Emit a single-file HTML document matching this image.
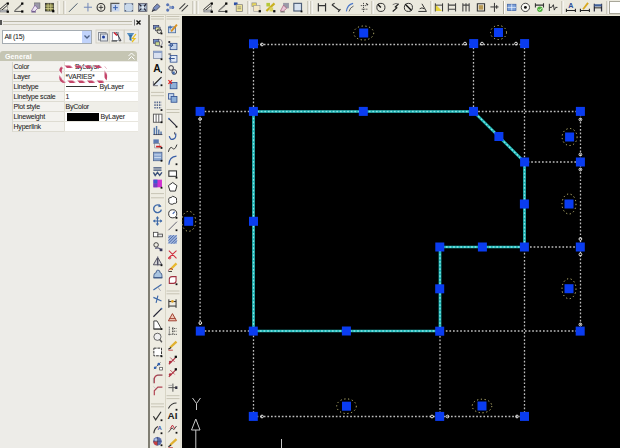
<!DOCTYPE html>
<html><head><meta charset="utf-8">
<style>
*{margin:0;padding:0;box-sizing:border-box}
html,body{width:620px;height:448px;overflow:hidden;background:#ECE9D8;font-family:"Liberation Sans",sans-serif;}
.abs{position:absolute}
#tb{left:0;top:0;width:620px;height:15px;background:#EBE9DE;border-bottom:1px solid #D3D0C2}
#pal{left:0;top:15px;width:148px;height:433px;background:#EDECE8}
#vt{left:148px;top:15px;width:34px;height:433px;background:#EEECE2}
#dw{left:182px;top:16px;width:438px;height:432px;background:#000}
.row{position:absolute;left:11.5px;width:125px;height:10px;font-size:7px;letter-spacing:-0.2px;color:#1A1A1A;-webkit-text-stroke:0.05px #222}
.row .n{position:absolute;left:0;top:0;width:52px;height:10.2px;padding-left:1px;line-height:10px;border-bottom:1px solid #DEDCD2;border-left:1px solid #D8D6CC;background:#F3F2EE}
.row .v{position:absolute;left:52px;top:0;width:74px;height:10px;padding-left:1px;line-height:10px;background:#fff;border-bottom:1px solid #E8E6DE;border-left:1px solid #E0DED4}
</style></head>
<body>
<div id="tb" class="abs"></div>
<div id="pal" class="abs"></div>
<div id="vt" class="abs"></div>
<div id="dw" class="abs"></div>
<div class="abs" style="left:148px;top:15px;width:1.5px;height:433px;background:#7F7D72"></div>
<div class="abs" style="left:164.5px;top:15px;width:1px;height:433px;background:#D8D5C6"></div>
<div class="abs" style="left:180px;top:16px;width:2px;height:432px;background:#E4E2D6"></div>
<div class="abs" style="left:608.5px;top:1px;width:12px;height:12.5px;background:#fff;border:1px solid #A9A79A;border-right:none"></div>

<!-- palette content -->
<div class="abs" style="left:3px;top:21px;width:129px;height:1px;background:#B8B5A6"></div>
<div class="abs" style="left:3px;top:24px;width:129px;height:1px;background:#CFCCBE"></div>
<div class="abs" style="left:0;top:20px;width:1.5px;height:5px;background:#555"></div>
<svg class="abs" style="left:133px;top:18px" width="9" height="9"><path d="M1.5 1.5V7.5" stroke="#777" stroke-width="1"/><path d="M3.5 2.5L7.5 6.5M7.5 2.5L3.5 6.5" stroke="#111" stroke-width="1.4"/></svg>
<div class="abs" style="left:2px;top:30px;width:90px;height:14px;background:#fff;border:1px solid #A5ACB2"></div>
<div class="abs" style="left:4.5px;top:32.5px;font-size:7px;color:#111;letter-spacing:-0.3px">All (15)</div>
<div class="abs" style="left:82px;top:31px;width:9px;height:12px;background:#C1D3FB"></div>
<div class="abs" style="left:0;top:51px;width:137px;height:10px;background:#C5C5B3;border-radius:3px 3px 0 0"></div>
<div class="abs" style="left:5px;top:51.5px;font-size:7px;font-weight:bold;color:#fff;line-height:10px;letter-spacing:0.1px">General</div>
<div class="abs" style="left:0;top:61px;width:11.5px;height:71px;background:#EDECE8"></div>

<div class="row" style="top:61.5px"><div class="n">Color</div><div class="v" style="padding-left:10.5px">ByLayer</div></div>
<div class="row" style="top:71.5px"><div class="n">Layer</div><div class="v">*VARIES*</div></div>
<div class="row" style="top:81.6px"><div class="n">Linetype</div><div class="v"><span style="display:inline-block;width:31px;height:1px;background:#333;vertical-align:middle;margin:0 3px 0 0"></span>ByLayer</div></div>
<div class="row" style="top:91.8px"><div class="n">Linetype scale</div><div class="v">1</div></div>
<div class="row" style="top:102px"><div class="n">Plot style</div><div class="v" style="background:#EFEEE8">ByColor</div></div>
<div class="row" style="top:112px"><div class="n">Lineweight</div><div class="v"><span style="display:inline-block;width:32px;height:8px;background:#000;vertical-align:middle;margin:0 2px 0 1px"></span>ByLayer</div></div>
<div class="row" style="top:122px"><div class="n">Hyperlink</div><div class="v"></div></div>

<svg class="abs" style="left:0;top:0" width="620" height="448" viewBox="0 0 620 448">
<defs><pattern id="rp" patternUnits="userSpaceOnUse" width="7.5" height="7.5" patternTransform="rotate(-40)"><rect x="0" y="0" width="4.3" height="7.5" fill="#C4456A"/></pattern></defs>
<rect x="60.5" y="66.7" width="45.3" height="15" rx="4" ry="4" fill="none" stroke="#FFFFFF" stroke-opacity="0.45" stroke-width="2.6"/>
<rect x="60.5" y="66.7" width="45.3" height="15" rx="4" ry="4" fill="none" stroke="url(#rp)" stroke-width="2.6"/>
<path d="M128.5 56L131.5 53L134.5 56M128.5 59.5L131.5 56.5L134.5 59.5" stroke="#fff" stroke-width="1" fill="none"/>
<g fill="none" stroke="#D5D2C6" stroke-width="1"><rect x="96" y="30" width="13" height="13"/><rect x="109.5" y="30" width="14.5" height="13"/><rect x="124.5" y="30" width="14" height="13"/></g>
<rect x="98.5" y="32.5" width="7.5" height="7.5" fill="#E8ECF2" stroke="#8A8F98" stroke-width="1"/>
<rect x="100.5" y="34" width="7" height="7" fill="#DDE4EE" stroke="#7A7F88" stroke-width="1"/>
<circle cx="103.5" cy="37" r="1.5" fill="#1F3F9F"/>
<rect x="112.5" y="32.5" width="6" height="8" fill="#fff" stroke="#8890A0" stroke-width="0.8"/>
<path d="M114 32.5L117 35.5" stroke="#D02030" stroke-width="1.6"/><path d="M116.5 32.5L120 39L121 41" stroke="#334" stroke-width="1"/>
<path d="M111.5 41H117" stroke="#333" stroke-width="1"/><circle cx="120" cy="40.5" r="1" fill="#555"/>
<path d="M127 33H134L131.5 37V41L129.5 40V37Z" fill="#2F6FA8"/><path d="M127.5 34H133.5" stroke="#8FC0E8" stroke-width="0.8"/>
<path d="M136 34L132.5 38.5H135L132 42" stroke="#E8C020" stroke-width="1.2" fill="none"/>
<path d="M84.5 35.5L87 38L89.5 35.5" stroke="#4D6185" stroke-width="1.3" fill="none"/>
<g transform="translate(-1.00,2.00) scale(0.9)"><path d="M0.5 8.5L8.5 1.5M2 10L9.5 3.5" stroke="#333" stroke-width="1.1" fill="none"/><rect x="1" y="9" width="8" height="2" fill="#e8ecf4" stroke="#555" stroke-width="0.7"/><path d="M9.5 4V10" stroke="#555" stroke-width="0.9" stroke-dasharray="1 1" fill="none"/><rect x="8.5" y="0.5" width="2.5" height="2.5" fill="#000"/><rect x="8.5" y="9.5" width="2.5" height="2.5" fill="#000"/></g>
<g transform="translate(13.50,2.00) scale(0.9)"><path d="M1 10L9.5 2" stroke="#333" stroke-width="1.1" fill="none"/><path d="M3 9L9 4" stroke="#999" stroke-width="0.8" fill="none"/><path d="M1 10.5H9.5" stroke="#444" stroke-width="1" fill="none"/><rect x="8.5" y="0.5" width="2.5" height="2.5" fill="#000"/><rect x="8.5" y="9.3" width="2.5" height="2.5" fill="#000"/></g>
<g transform="translate(30.50,2.00) scale(0.9)"><rect x="4.5" y="1" width="6" height="6" fill="#9a98a8" stroke="#666" stroke-width="0.6"/><path d="M1 10L5 3.5L8 7L4.5 10.5Z" fill="#ece4f4" stroke="#7b5c9a" stroke-width="0.8"/><path d="M1 11H6" stroke="#523c7a" stroke-width="1.2"/></g>
<g transform="translate(44.50,2.00) scale(0.9)"><rect x="1" y="1.5" width="9" height="8.5" fill="#6b6b3a" stroke="#333" stroke-width="0.9"/><path d="M1 4.5H10M1 7.3H10M4 1.5V10M7 1.5V10" stroke="#d8d490" stroke-width="0.9"/><rect x="8.5" y="9" width="2.5" height="2.5" fill="#000"/></g>
<g transform="translate(68.00,2.00) scale(0.9)"><path d="M1 11L10.5 1.5" stroke="#4a5a6a" stroke-width="1.1" fill="none"/></g>
<g transform="translate(83.00,2.00) scale(0.9)"><path d="M5.5 1V10.5M1 5.8H10" stroke="#6f86b8" stroke-width="1.1"/></g>
<g transform="translate(96.00,2.00) scale(0.9)"><circle cx="5.5" cy="6" r="4.3" stroke="#333" stroke-width="1.2" fill="none"/><path d="M5.5 3.5V8.5M3 6H8" stroke="#333" stroke-width="1"/></g>
<g transform="translate(110.00,2.00) scale(0.9)"><rect x="1" y="1.5" width="9.5" height="9" fill="#c9d6ec"/><path d="M1 11V1.5H10.5" stroke="#555" stroke-width="1.3" fill="none"/><path d="M6 3.5V9M3.3 6.3H8.7" stroke="#3860b0" stroke-width="1.1"/></g>
<g transform="translate(123.50,2.00) scale(0.9)"><rect x="1" y="1.5" width="9.5" height="9" fill="#c8d8ea" stroke="#8da0b8" stroke-width="0.8"/><path d="M2 3V2H3M9 2H10V3M2 9V10H3M9 10H10V9" stroke="#445" stroke-width="1" fill="none"/></g>
<g transform="translate(137.50,2.00) scale(0.9)"><rect x="1" y="1.5" width="9.5" height="9" fill="#a9b9cc" stroke="#556" stroke-width="0.8"/><path d="M2 2.5L4.5 5M9.5 2.5L7 5M2 9.5L4.5 7M9.5 9.5L7 7" stroke="#223" stroke-width="1.3"/><rect x="4.3" y="4.5" width="3" height="3" fill="#dde6f0"/></g>
<g transform="translate(151.00,2.00) scale(0.9)"><path d="M1.5 10L3 6L7 2L10 5L6 9Z" fill="#7b8fc0" stroke="#334" stroke-width="0.8"/><path d="M1 11L4 8" stroke="#222" stroke-width="1"/></g>
<g transform="translate(165.00,2.00) scale(0.9)"><circle cx="3" cy="3" r="1.7" fill="#4f6fb5"/><circle cx="8.5" cy="6" r="1.7" fill="#4f6fb5"/><circle cx="3" cy="9" r="1.7" fill="#4f6fb5"/><circle cx="6" cy="6" r="1.5" fill="#7f9fd5"/><path d="M3 3L8.5 6L3 9" stroke="#99a" stroke-width="0.6" fill="none"/></g>
<g transform="translate(178.50,2.00) scale(0.9)"><path d="M1 8L7.5 1.5M3.5 10.5L10.5 3.5" stroke="#444" stroke-width="1.2"/></g>
<g transform="translate(203.00,2.00) scale(0.9)"><path d="M0.5 8.5L8.5 1.5M2 10L9.5 3.5" stroke="#333" stroke-width="1.1" fill="none"/><rect x="1" y="9" width="8" height="2" fill="#e8ecf4" stroke="#555" stroke-width="0.7"/><path d="M9.5 4V10" stroke="#555" stroke-width="0.9" stroke-dasharray="1 1" fill="none"/><rect x="8.5" y="0.5" width="2.5" height="2.5" fill="#000"/><rect x="8.5" y="9.5" width="2.5" height="2.5" fill="#000"/></g>
<g transform="translate(217.50,2.00) scale(0.9)"><path d="M1 10L9.5 2" stroke="#333" stroke-width="1.1" fill="none"/><path d="M3 9L9 4" stroke="#999" stroke-width="0.8" fill="none"/><path d="M1 10.5H9.5" stroke="#444" stroke-width="1" fill="none"/><rect x="8.5" y="0.5" width="2.5" height="2.5" fill="#000"/><rect x="8.5" y="9.3" width="2.5" height="2.5" fill="#000"/></g>
<g transform="translate(233.50,2.00) scale(0.9)"><rect x="0.5" y="0.5" width="4" height="3" fill="#2b4fa8"/><rect x="3" y="3" width="7" height="7.5" fill="#f3e89a" stroke="#777" stroke-width="0.8"/><path d="M4.5 5.5H8.5M4.5 7.5H8.5" stroke="#666" stroke-width="0.7"/></g>
<g transform="translate(251.00,2.00) scale(0.9)"><rect x="1" y="1" width="5" height="4" fill="#e9d75a" stroke="#888" stroke-width="0.7"/><rect x="3" y="4" width="7" height="6.5" fill="#f4e8c8" stroke="#999" stroke-width="0.7"/><rect x="8.5" y="9" width="2.5" height="2.5" fill="#111"/></g>
<g transform="translate(265.50,2.00) scale(0.9)"><path d="M1 10L10 1.5" stroke="#c9b020" stroke-width="2.4"/><rect x="1" y="1" width="4" height="4" fill="#b5c838"/><rect x="4.5" y="6" width="4" height="4.5" fill="#d7d060"/><rect x="8.5" y="9" width="2.5" height="2.5" fill="#111"/></g>
<g transform="translate(279.50,2.00) scale(0.9)"><rect x="4" y="1" width="6.5" height="6" fill="#9a9aa8"/><path d="M1 10L4.5 3.5L8 7L4 10.5Z" fill="#e9c6d8" stroke="#a05070" stroke-width="0.7"/><path d="M1 11H6" stroke="#555" stroke-width="1"/></g>
<g transform="translate(292.50,2.00) scale(0.9)"><rect x="1.5" y="1.5" width="8.5" height="8.5" fill="#d8e2f0" stroke="#4e5e78" stroke-width="1.3"/><rect x="9" y="9.5" width="2" height="2" fill="#111"/></g>
<g transform="translate(317.00,2.00) scale(0.9)"><path d="M1.5 1.5V10.5M9.5 1.5V10.5M1.5 4H9.5" stroke="#333" stroke-width="1.3" fill="none"/></g>
<g transform="translate(331.00,2.00) scale(0.9)"><path d="M1 3L4 1.5M1 3L9.5 9.5M8 11L10.5 8" stroke="#333" stroke-width="1.3" fill="none"/></g>
<g transform="translate(345.00,2.00) scale(0.9)"><path d="M1.5 10.5Q2.5 3 9 1.5" stroke="#4a77c8" stroke-width="1.3" fill="none"/><path d="M4.5 10.5Q5.5 6 9.5 4.5" stroke="#555" stroke-width="1" fill="none"/></g>
<g transform="translate(359.00,2.00) scale(0.9)"><path d="M5 1V11M2 4H9M3 8H10" stroke="#333" stroke-width="1" stroke-dasharray="1.2 1" fill="none"/><path d="M8 1.5L10 3.5" stroke="#222" stroke-width="1.2"/></g>
<g transform="translate(375.50,2.00) scale(0.9)"><circle cx="6" cy="6" r="4.5" stroke="#333" stroke-width="1.1" fill="none"/><path d="M2.5 2.5L6 6" stroke="#111" stroke-width="1.5"/></g>
<g transform="translate(390.00,2.00) scale(0.9)"><path d="M9.5 2L6 5.5L7.5 6.5L3 10.5" stroke="#222" stroke-width="1.4" fill="none"/><path d="M3 3Q7 0 10 3" stroke="#555" stroke-width="0.9" fill="none"/></g>
<g transform="translate(403.00,2.00) scale(0.9)"><circle cx="6" cy="6" r="4.5" stroke="#333" stroke-width="1.1" fill="none"/><path d="M2.5 2.5L9.5 9.5" stroke="#111" stroke-width="1.5"/></g>
<g transform="translate(417.00,2.00) scale(0.9)"><path d="M1.5 10.5H10.5L5.5 2M3 7.5Q5.5 5.5 8 7.5" stroke="#333" stroke-width="1.1" fill="none"/></g>
<g transform="translate(434.00,2.00) scale(0.9)"><path d="M1.5 1.5V10.5M9.5 1.5V10.5" stroke="#333" stroke-width="1.1"/><path d="M2 3L9 10H2Z" fill="#e8d43a"/><path d="M1.5 3.5H9.5" stroke="#333" stroke-width="1"/></g>
<g transform="translate(447.00,2.00) scale(0.9)"><path d="M1.5 1.5V10.5M9.5 1.5V10.5M1.5 3.5H9.5M1.5 8H9.5" stroke="#444" stroke-width="1.2" fill="none"/></g>
<g transform="translate(461.50,2.00) scale(0.9)"><path d="M1.5 1.5V10.5M5 1.5V10.5M8.5 1.5V10.5M1.5 3.5H8.5" stroke="#444" stroke-width="1.2" fill="none"/></g>
<g transform="translate(476.00,2.00) scale(0.9)"><path d="M1.5 1.5V10.5M9.5 1.5V10.5M1.5 2H9.5M1.5 10H9.5" stroke="#333" stroke-width="1.2" fill="none"/><rect x="3" y="3.5" width="5" height="5" fill="#b89a55"/></g>
<g transform="translate(489.50,2.00) scale(0.9)"><path d="M5.5 1V11M1 5.5H5M6 5.5H10M8 3.5V7.5" stroke="#333" stroke-width="1.1"/></g>
<g transform="translate(506.50,2.00) scale(0.9)"><rect x="1" y="2.5" width="9.5" height="7" fill="#7aa0d8" stroke="#3f63a5" stroke-width="0.8"/><path d="M1 6H10.5M5.8 2.5V9.5" stroke="#e6efff" stroke-width="0.9"/></g>
<g transform="translate(520.00,2.00) scale(0.9)"><circle cx="6" cy="6" r="4.6" stroke="#333" stroke-width="1" fill="#fafaf5"/><circle cx="6" cy="6" r="1.6" fill="#111"/></g>
<g transform="translate(534.50,2.00) scale(0.9)"><path d="M1 1.5V6M10 1.5V6M1 3.5H10" stroke="#333" stroke-width="1.2"/><circle cx="6" cy="8" r="3" fill="#4cb03a"/><path d="M4.5 8L5.7 9.3L7.8 6.8" stroke="#fff" stroke-width="0.9" fill="none"/></g>
<g transform="translate(548.00,2.00) scale(0.9)"><path d="M1.5 2V10M1.5 6H4L6 3L7 9L8.5 6H10.5" stroke="#333" stroke-width="1.1" fill="none"/></g>
<g transform="translate(565.50,2.00) scale(0.9)"><text x="6" y="7" font-size="8" font-weight="bold" text-anchor="middle" fill="#2b4f98" font-family="Liberation Sans">A</text><path d="M1 9.5H11M1 7.5V11M11 7.5V11" stroke="#222" stroke-width="1.2"/></g>
<g transform="translate(579.50,2.00) scale(0.9)"><path d="M4 8L9.5 1" stroke="#d8a820" stroke-width="2"/><path d="M1 9.5H11M1 7.5V11M11 7.5V11" stroke="#222" stroke-width="1.2"/></g>
<g transform="translate(593.00,2.00) scale(0.9)"><path d="M1.5 2V10.5M9.5 2V10.5" stroke="#334" stroke-width="1.4"/><rect x="1.5" y="2.5" width="8" height="2.5" fill="#3f5f98"/><path d="M1.5 6.5H9.5" stroke="#111" stroke-width="1"/></g>
<path d="M58.0 1V14" stroke="#ACA899" stroke-width="1"/><path d="M59.0 1V14" stroke="#FFFFFF" stroke-width="1"/>
<path d="M64.0 1V14" stroke="#ACA899" stroke-width="1"/><path d="M65.0 1V14" stroke="#FFFFFF" stroke-width="1"/>
<path d="M193.0 1V14" stroke="#ACA899" stroke-width="1"/><path d="M194.0 1V14" stroke="#FFFFFF" stroke-width="1"/>
<path d="M197.0 1V14" stroke="#ACA899" stroke-width="1"/><path d="M198.0 1V14" stroke="#FFFFFF" stroke-width="1"/>
<path d="M248.0 1V14" stroke="#ACA899" stroke-width="1"/><path d="M249.0 1V14" stroke="#FFFFFF" stroke-width="1"/>
<path d="M308.0 1V14" stroke="#ACA899" stroke-width="1"/><path d="M309.0 1V14" stroke="#FFFFFF" stroke-width="1"/>
<path d="M311.0 1V14" stroke="#ACA899" stroke-width="1"/><path d="M312.0 1V14" stroke="#FFFFFF" stroke-width="1"/>
<path d="M372.0 1V14" stroke="#ACA899" stroke-width="1"/><path d="M373.0 1V14" stroke="#FFFFFF" stroke-width="1"/>
<path d="M431.0 1V14" stroke="#ACA899" stroke-width="1"/><path d="M432.0 1V14" stroke="#FFFFFF" stroke-width="1"/>
<path d="M503.5 1V14" stroke="#ACA899" stroke-width="1"/><path d="M504.5 1V14" stroke="#FFFFFF" stroke-width="1"/>
<path d="M562.0 1V14" stroke="#ACA899" stroke-width="1"/><path d="M563.0 1V14" stroke="#FFFFFF" stroke-width="1"/>
<path d="M607.0 1V14" stroke="#ACA899" stroke-width="1"/><path d="M608.0 1V14" stroke="#FFFFFF" stroke-width="1"/>
<g transform="translate(152.50,24.00) scale(0.9)"><rect x="1" y="1.5" width="6" height="4" fill="#6f8fc8" stroke="#335" stroke-width="0.7"/><rect x="3.5" y="3.5" width="5" height="4" fill="#d8dc9a" stroke="#446" stroke-width="0.7"/><circle cx="7.5" cy="8" r="2.5" fill="none" stroke="#333" stroke-width="1"/><rect x="9" y="9.5" width="2" height="2" fill="#111"/></g>
<g transform="translate(152.50,37.40) scale(0.9)"><circle cx="7" cy="6" r="4" fill="none" stroke="#889" stroke-width="1"/><rect x="1" y="2.5" width="6" height="4" fill="#6f8fc8" stroke="#335" stroke-width="0.7"/><rect x="3" y="5" width="5" height="4" fill="#c8d890" stroke="#446" stroke-width="0.7"/><rect x="9" y="9.5" width="2" height="2" fill="#111"/></g>
<g transform="translate(152.50,49.80) scale(0.9)"><rect x="1" y="1.5" width="9.5" height="8" fill="#d8e0f0" stroke="#6f7f9f" stroke-width="0.8"/><rect x="1" y="1.5" width="9.5" height="2" fill="#8aa0c8"/><rect x="9" y="9.5" width="2" height="2" fill="#111"/></g>
<g transform="translate(152.50,62.80) scale(0.9)"><text x="5" y="10.5" font-size="11.5" font-weight="bold" text-anchor="middle" fill="#111" font-family="Liberation Sans">A</text><rect x="9" y="9.5" width="1.6" height="2" fill="#111"/></g>
<g transform="translate(152.50,75.80) scale(0.9)"><path d="M1 10.5L10 1.5V10.5Z" fill="#dfe8f4"/><path d="M1 10.5L10 1.5" stroke="#222" stroke-width="1.3"/><path d="M1 11V6M1 11H6" stroke="#556" stroke-width="0.9"/><rect x="9" y="9.5" width="2" height="2" fill="#111"/></g>
<g transform="translate(152.50,100.60) scale(0.9)"><path d="M2 2H10M2 5H10M2 8H10" stroke="#5b6b90" stroke-width="1.8" stroke-dasharray="1.6 1"/><rect x="9" y="9.5" width="2" height="2" fill="#111"/></g>
<g transform="translate(152.50,112.80) scale(0.9)"><rect x="1" y="1.5" width="9.5" height="9" fill="#fff" stroke="#555" stroke-width="1"/><path d="M4 1.5V10.5M7 1.5V10.5" stroke="#555" stroke-width="1"/><rect x="9" y="9.5" width="2" height="2" fill="#111"/></g>
<g transform="translate(152.50,125.10) scale(0.9)"><path d="M2 11V3M4.5 11V1M7 11V5M9.5 11V7" stroke="#5577aa" stroke-width="1.6"/><path d="M1 10.5H11" stroke="#334" stroke-width="0.8"/></g>
<g transform="translate(152.50,138.50) scale(0.9)"><rect x="1" y="1" width="6" height="5" fill="#5a78b0"/><rect x="2.5" y="5.5" width="5" height="5" fill="#e7e8f0" stroke="#777" stroke-width="0.6"/><path d="M4 9H10" stroke="#d02020" stroke-width="1.8"/><rect x="9" y="9.5" width="2" height="2" fill="#111"/></g>
<g transform="translate(152.50,151.30) scale(0.9)"><rect x="1" y="1" width="9.5" height="9.5" fill="#8aa6d0" stroke="#4a5f8a" stroke-width="0.8"/><path d="M2 4H9.5M2 7H9.5" stroke="#d8e4f4" stroke-width="1"/><rect x="9" y="9.5" width="2" height="2" fill="#111"/></g>
<g transform="translate(152.50,166.00) scale(0.9)"><path d="M1 2H10M1 4.5H10M1 7L3 10.5L5.5 7L8 10.5L10.5 7" stroke="#3a4f7a" stroke-width="1.5" fill="none"/></g>
<g transform="translate(152.50,178.30) scale(0.9)"><rect x="1" y="1.5" width="9.5" height="8.5" fill="#d030d0"/><rect x="1" y="1.5" width="4.5" height="4.5" fill="#3a5ad0"/><rect x="1" y="6" width="4.5" height="4" fill="#7040c0"/><rect x="9" y="9.5" width="2" height="2" fill="#111"/></g>
<g transform="translate(152.50,202.80) scale(0.9)"><path d="M9 4A4.3 4.3 0 1 0 9.8 7.5" stroke="#3f6aa8" stroke-width="1.6" fill="none"/><path d="M7 1L10 4L6.5 5Z" fill="#3f6aa8"/></g>
<g transform="translate(152.50,215.80) scale(0.9)"><path d="M5.5 1V10.5M1 5.8H10.5" stroke="#3f6aa8" stroke-width="1.3"/><path d="M5.5 0.5L3.5 3H7.5ZM5.5 11L3.5 8.5H7.5ZM0.5 5.8L3 3.8V7.8ZM11 5.8L8.5 3.8V7.8Z" fill="#3f6aa8"/></g>
<g transform="translate(152.50,229.60) scale(0.9)"><rect x="1" y="3" width="5" height="5" fill="#fff" stroke="#444" stroke-width="0.9"/><rect x="6" y="5" width="5" height="3" fill="#e8e8e8" stroke="#444" stroke-width="0.9"/></g>
<g transform="translate(152.50,241.30) scale(0.9)"><circle cx="4" cy="4" r="2.5" fill="none" stroke="#333" stroke-width="1"/><path d="M3 8Q6 6 9 9" stroke="#557" stroke-width="1.3" fill="none"/><rect x="8" y="8" width="3" height="3" fill="#335"/></g>
<g transform="translate(152.50,255.80) scale(0.9)"><path d="M1 10H5.5V2ZM10.5 10H6V2Z" fill="#ddd" stroke="#445" stroke-width="1"/><path d="M5.8 0.5V11.5" stroke="#557" stroke-width="0.8" stroke-dasharray="1 1"/><rect x="9" y="9.5" width="2" height="2" fill="#111"/></g>
<g transform="translate(152.50,268.30) scale(0.9)"><path d="M1.5 10.5V8Q1.5 5 4 5Q4 2 6 2Q8.5 2 8.5 5Q10.5 5 10.5 8V10.5Z" fill="#a9c4e0" stroke="#3f5a88" stroke-width="1"/><path d="M1 10.5H11" stroke="#3f5a88" stroke-width="1.3"/></g>
<g transform="translate(152.50,281.80) scale(0.9)"><path d="M1 9L10 3" stroke="#3f6aa8" stroke-width="1.3"/><path d="M6 6L9 10" stroke="#889" stroke-width="0.8"/></g>
<g transform="translate(152.50,293.80) scale(0.9)"><path d="M1 4L10 8M6 2L4 10" stroke="#3f6aa8" stroke-width="1.3"/></g>
<g transform="translate(152.50,307.30) scale(0.9)"><path d="M1 10.5L10 1.5" stroke="#223" stroke-width="1.3"/><circle cx="10" cy="1.5" r="1" fill="#3f6aa8"/></g>
<g transform="translate(152.50,319.60) scale(0.9)"><path d="M1.5 10.5V1.5H5L10 10.5Z" fill="#fff" stroke="#333" stroke-width="1"/><path d="M1 10.5H10" stroke="#333" stroke-width="1"/><rect x="9" y="9.5" width="2" height="2" fill="#111"/></g>
<g transform="translate(152.50,332.30) scale(0.9)"><circle cx="5.5" cy="5" r="4" fill="#eee" stroke="#555" stroke-width="1"/><path d="M8 8L10.5 11" stroke="#555" stroke-width="1.5"/></g>
<g transform="translate(152.50,346.80) scale(0.9)"><rect x="1.5" y="1.5" width="8.5" height="8.5" fill="#fff" stroke="#333" stroke-width="1.1" stroke-dasharray="3 1"/><rect x="9" y="9.5" width="2" height="2" fill="#111"/></g>
<g transform="translate(152.50,360.10) scale(0.9)"><path d="M1.5 10L5 6.5M5 6.5L9 2.5" stroke="#333" stroke-width="1" stroke-dasharray="1.5 1"/><circle cx="3" cy="8.5" r="1.5" fill="#2f5fb0"/><circle cx="7" cy="4.5" r="1.5" fill="#2f5fb0"/><rect x="8" y="8" width="3" height="3" fill="#fff" stroke="#333" stroke-width="0.7"/></g>
<g transform="translate(152.50,373.30) scale(0.9)"><path d="M2 11V7Q2 2 7 2H11" stroke="#b04050" stroke-width="1.3" fill="none"/><path d="M1 11V5M5 2H11" stroke="#777" stroke-width="0.6"/></g>
<g transform="translate(152.50,385.40) scale(0.9)"><path d="M2 11V6L6 2H11" stroke="#b04050" stroke-width="1.3" fill="none"/><path d="M1 1L5 5" stroke="#aaa" stroke-width="0.6"/></g>
<g transform="translate(152.50,410.80) scale(0.9)"><path d="M1 6L3.5 10L9.5 1" stroke="#333" stroke-width="1.3" fill="none"/><rect x="9" y="9.5" width="2" height="2" fill="#111"/></g>
<g transform="translate(152.50,423.80) scale(0.9)"><path d="M1.5 10.5Q2 5 6 3" stroke="#333" stroke-width="1.3" fill="none"/><text x="8" y="7" font-size="6.5" font-weight="bold" text-anchor="middle" fill="#3355aa" font-family="Liberation Sans">A</text><rect x="9" y="9.5" width="2" height="2" fill="#111"/></g>
<g transform="translate(152.50,435.80) scale(0.9)"><circle cx="5.5" cy="6" r="4.8" fill="#5a6fb0"/><path d="M1 6A4.8 4.8 0 0 0 5.5 10.8V6Z" fill="#c84040"/><circle cx="4" cy="4.5" r="1.8" fill="#b8c8e8"/><path d="M1 6H10M5.5 1.2V10.8" stroke="#334" stroke-width="0.5"/><rect x="9" y="9.5" width="2" height="2" fill="#111"/></g>
<g transform="translate(167.50,23.30) scale(0.9)"><rect x="1" y="4" width="8" height="6.5" fill="#cddcf0" stroke="#4a6a9a" stroke-width="0.9"/><path d="M4 9L10.5 1.5" stroke="#d89020" stroke-width="2"/><path d="M3 2.5V7M1 4.5H5" stroke="#3a6ab0" stroke-width="1"/></g>
<g transform="translate(167.50,40.20) scale(0.9)"><rect x="3" y="3.5" width="7.5" height="7" fill="#c3d3ea" stroke="#2f4f90" stroke-width="0.9"/><path d="M1 5.5H6M4 3.5L6 5.5L4 7.5" stroke="#2f4f90" stroke-width="1.1" fill="none"/><rect x="1" y="1" width="2" height="2" fill="#112"/></g>
<g transform="translate(167.50,52.70) scale(0.9)"><rect x="3" y="3" width="7.5" height="7.5" fill="#e3ebf7" stroke="#2f4f90" stroke-width="0.9"/><path d="M8 6.5H2M4 4.5L2 6.5L4 8.5" stroke="#2f4f90" stroke-width="1.1" fill="none"/><path d="M1 1.5H4" stroke="#223" stroke-width="1"/></g>
<g transform="translate(167.50,64.80) scale(0.9)"><circle cx="4" cy="3.5" r="2.6" fill="none" stroke="#334" stroke-width="1.1"/><circle cx="7.5" cy="8" r="2.6" fill="none" stroke="#334" stroke-width="1.1"/><rect x="5.5" y="7.5" width="2.5" height="3" fill="#3f6ab0"/></g>
<g transform="translate(167.50,79.30) scale(0.9)"><rect x="3" y="3.5" width="7.5" height="7" fill="#8fb0d8" stroke="#2f4f90" stroke-width="0.9"/><path d="M1 1L5 5M5 1L1 5" stroke="#e02020" stroke-width="1.3"/></g>
<g transform="translate(167.50,92.80) scale(0.9)"><rect x="1" y="1" width="6" height="6" fill="#c8d8ee" stroke="#2f4f90" stroke-width="0.9"/><rect x="4" y="4" width="6.5" height="6.5" fill="#8fb0d8" stroke="#2f4f90" stroke-width="0.9"/></g>
<g transform="translate(167.50,117.30) scale(0.9)"><path d="M1.5 1.5L9.5 9.5" stroke="#223" stroke-width="1.2"/><circle cx="1.5" cy="1.5" r="1" fill="#4a7ac8"/><rect x="9" y="9.5" width="2" height="2" fill="#111"/></g>
<g transform="translate(167.50,130.80) scale(0.9)"><path d="M2 6Q3 11 7 9Q10 7.5 9 3" stroke="#3a5fa8" stroke-width="1.4" fill="none"/><path d="M8 1.5V4" stroke="#334" stroke-width="1"/></g>
<g transform="translate(167.50,142.80) scale(0.9)"><path d="M1 10Q3 3 5.5 6Q8 9 10.5 2" stroke="#333" stroke-width="1.1" fill="none"/></g>
<g transform="translate(167.50,154.80) scale(0.9)"><path d="M1.5 11Q2 2 10 1.5" stroke="#3a5fa8" stroke-width="1.3" fill="none"/><rect x="9" y="9.5" width="2" height="2" fill="#111"/></g>
<g transform="translate(167.50,168.20) scale(0.9)"><rect x="1.5" y="3" width="8.5" height="6" fill="#fff" stroke="#333" stroke-width="1.2"/><rect x="9" y="9.5" width="2" height="2" fill="#111"/></g>
<g transform="translate(167.50,181.60) scale(0.9)"><path d="M5.8 1L10.5 4.5L8.8 10.5H2.8L1 4.5Z" fill="#fff" stroke="#333" stroke-width="1.1"/></g>
<g transform="translate(167.50,194.80) scale(0.9)"><path d="M3 10Q0.5 9 1.5 6.5Q0.5 3 4 3Q5.5 0.5 8 2.5Q11 3 10 6.5Q11 10 7.5 9.5Q5 11.5 3 10Z" fill="#fff" stroke="#333" stroke-width="1.1"/></g>
<g transform="translate(167.50,208.40) scale(0.9)"><circle cx="5.8" cy="6" r="4.5" fill="#fff" stroke="#333" stroke-width="1.1"/><path d="M5.8 6L8 3.5" stroke="#3a5fa8" stroke-width="1.2"/><rect x="9" y="9.5" width="2" height="2" fill="#111"/></g>
<g transform="translate(167.50,220.80) scale(0.9)"><path d="M1 10.5L10.5 1" stroke="#556" stroke-width="1"/><rect x="9" y="9.5" width="2" height="2" fill="#111"/></g>
<g transform="translate(167.50,234.30) scale(0.9)"><rect x="1" y="1" width="9.5" height="9.5" fill="#9fb4dc"/><path d="M1 4L4 1M1 7L7 1M1 10L10 1M4 10.5L10.5 4M7 10.5L10.5 7" stroke="#3f5f9f" stroke-width="0.9"/></g>
<g transform="translate(167.50,249.30) scale(0.9)"><path d="M1.5 1.5L10 10M10 1.5L3 8M3 8L1 10.5" stroke="#d03040" stroke-width="1.2" fill="none"/><circle cx="2.5" cy="9.5" r="1.2" fill="none" stroke="#d03040"/></g>
<g transform="translate(167.50,261.60) scale(0.9)"><path d="M3 9L10 2" stroke="#e8b830" stroke-width="2.5"/><path d="M1 10Q3 6 6 9" stroke="#a03040" stroke-width="1.1" fill="none"/><path d="M1 11H5" stroke="#333" stroke-width="1"/></g>
<g transform="translate(167.50,274.80) scale(0.9)"><path d="M2 9.5V5Q2 2 5 2H9.5V6.5Q9.5 9.5 6.5 9.5Z" fill="#fff" stroke="#a03040" stroke-width="1.2"/><rect x="9" y="9.5" width="2" height="2" fill="#111"/></g>
<g transform="translate(167.50,298.40) scale(0.9)"><path d="M1.5 1V10.5M9.5 1V10.5M1.5 3.5H9.5M1.5 8.5H9.5" stroke="#333" stroke-width="1.1"/><circle cx="5.5" cy="3.2" r="1.5" fill="#e0a020"/></g>
<g transform="translate(167.50,311.80) scale(0.9)"><path d="M1 10L5.5 2L10 10Z" fill="#f0c8b8" stroke="#a04030" stroke-width="1.1"/><path d="M2 7.5H9" stroke="#a04030" stroke-width="1"/></g>
<g transform="translate(167.50,325.80) scale(0.9)"><path d="M2 1V10.5M1 9.5H10.5M5 3H10M5 6H10M6 1.5V9" stroke="#333" stroke-width="0.9" stroke-dasharray="1.3 0.8"/></g>
<g transform="translate(167.50,340.30) scale(0.9)"><path d="M3 8L10 1.5" stroke="#e0b030" stroke-width="2.6"/><path d="M1 10L4 8" stroke="#222" stroke-width="1.2"/><path d="M1 11H6" stroke="#c04040" stroke-width="1"/></g>
<g transform="translate(167.50,354.80) scale(0.9)"><path d="M1.5 10.5L9.5 2.5" stroke="#b03040" stroke-width="1.2"/><path d="M3 3L8 8" stroke="#b03040" stroke-width="0.8"/><rect x="8" y="1" width="2.5" height="2.5" fill="#111"/><circle cx="3" cy="8" r="1.5" fill="#b03040"/></g>
<g transform="translate(167.50,367.30) scale(0.9)"><path d="M1.5 10.5L9.5 2.5" stroke="#b03040" stroke-width="1.2"/><path d="M3 3L8 8" stroke="#b03040" stroke-width="0.8"/><rect x="8" y="1" width="2.5" height="2.5" fill="#111"/><circle cx="3" cy="8" r="1.5" fill="#b03040"/></g>
<g transform="translate(167.50,381.80) scale(0.9)"><path d="M1 6.5H10.5M6 2V11" stroke="#555" stroke-width="1.1"/><path d="M1 4H6" stroke="#999" stroke-width="0.8"/><rect x="8.5" y="5" width="2.5" height="3" fill="#334"/></g>
<g transform="translate(167.50,400.30) scale(0.9)"><path d="M1 9Q4 3 10 3" stroke="#333" stroke-width="1.2" fill="none"/><rect x="9" y="9.5" width="2" height="2" fill="#111"/></g>
<g transform="translate(167.50,409.30) scale(0.9)"><text x="5.5" y="10.5" font-size="11" font-weight="bold" text-anchor="middle" fill="#222" font-family="Liberation Sans">AI</text></g>
<g transform="translate(167.50,423.30) scale(0.9)"><path d="M1 10L5 5L7 7L10 3" stroke="#333" stroke-width="1" fill="none"/><path d="M3 6L5.5 2L8 6" stroke="#c03040" stroke-width="1.1" fill="none"/><rect x="9" y="9.5" width="2" height="2" fill="#111"/></g>
<g transform="translate(167.50,437.80) scale(0.9)"><path d="M3 8L10 1.5" stroke="#e0b030" stroke-width="2.6"/><path d="M1 10L4 8" stroke="#222" stroke-width="1.2"/><path d="M1 11H6" stroke="#c04040" stroke-width="1"/></g>
<path d="M151 92.4H164M151 95.7H164" stroke="#C7C4B4" stroke-width="1"/>
<path d="M151 193.6H164M151 197.8H164" stroke="#C7C4B4" stroke-width="1"/>
<path d="M151 403.9H164M151 406.8H164" stroke="#C7C4B4" stroke-width="1"/>
<path d="M166.5 36.8H179.5" stroke="#D3D0C0" stroke-width="1"/>
<path d="M166.5 109.5H179.5M166.5 112.5H179.5" stroke="#C7C4B4" stroke-width="1"/>
<path d="M166.5 291.0H179.5M166.5 293.8H179.5" stroke="#C7C4B4" stroke-width="1"/>
<path d="M166.5 395.7H179.5M166.5 398.6H179.5" stroke="#C7C4B4" stroke-width="1"/>
<path d="M151 16.5H164M151 19H164M166.5 16.5H179.5M166.5 19H179.5" stroke="#C7C4B4" stroke-width="1"/>
</svg>

<!-- drawing -->
<svg class="abs" style="left:0;top:0" width="620" height="448" viewBox="0 0 620 448">
 <g stroke="#BDBDBD" stroke-width="1.3" stroke-dasharray="1.7 1.9" fill="none">
  <path d="M253 44.5H524 M201 111.5H580 M524 162H580 M440 247H580 M201 331H580 M253 416.5H524"/>
  <path d="M253.5 44V416 M473.5 44V111 M524.5 44V416 M200.1 111V330 M580.5 111V330 M440 246V416"/>
 </g>
 <g stroke="#1EB4B4" stroke-width="2.7" fill="none">
  <path d="M253.5 111.5H473.5L524.5 162V247H440V331H253.5Z"/>
 </g>
 <g stroke="#86E6E6" stroke-width="1.3" stroke-dasharray="1.8 1.8" fill="none">
  <path d="M253.5 111.5H473.5L524.5 162V247H440V331H253.5Z"/>
 </g>
 <g fill="#0A3CF0">
<rect x="249.0" y="39.3" width="9" height="9"/>
<rect x="469.2" y="39.1" width="9" height="9"/>
<rect x="520.1" y="39.1" width="9" height="9"/>
<rect x="195.6" y="106.9" width="9" height="9"/>
<rect x="248.9" y="106.9" width="9" height="9"/>
<rect x="358.8" y="106.9" width="9" height="9"/>
<rect x="469.0" y="106.9" width="9" height="9"/>
<rect x="575.9" y="106.9" width="9" height="9"/>
<rect x="494.4" y="132.0" width="9" height="9"/>
<rect x="520.1" y="157.5" width="9" height="9"/>
<rect x="575.9" y="157.5" width="9" height="9"/>
<rect x="519.9" y="199.5" width="9" height="9"/>
<rect x="249.0" y="216.8" width="9" height="9"/>
<rect x="435.3" y="242.5" width="9" height="9"/>
<rect x="477.9" y="242.5" width="9" height="9"/>
<rect x="519.9" y="242.5" width="9" height="9"/>
<rect x="575.8" y="242.5" width="9" height="9"/>
<rect x="435.2" y="284.3" width="9" height="9"/>
<rect x="195.8" y="326.6" width="9" height="9"/>
<rect x="248.8" y="326.6" width="9" height="9"/>
<rect x="341.9" y="326.5" width="9" height="9"/>
<rect x="435.2" y="326.7" width="9" height="9"/>
<rect x="575.7" y="326.6" width="9" height="9"/>
<rect x="248.8" y="411.9" width="9" height="9"/>
<rect x="435.2" y="411.9" width="9" height="9"/>
<rect x="520.0" y="411.9" width="9" height="9"/>
<rect x="359.2" y="28.5" width="9" height="9"/>
<rect x="494.0" y="28.0" width="9" height="9"/>
<rect x="565.1" y="132.5" width="9" height="9"/>
<rect x="564.5" y="199.5" width="9" height="9"/>
<rect x="184.2" y="216.8" width="9" height="9"/>
<rect x="564.5" y="284.2" width="9" height="9"/>
<rect x="342.0" y="401.7" width="9" height="9"/>
<rect x="477.5" y="401.5" width="9" height="9"/>
 </g>
 <g fill="none" stroke="#CFC77E" stroke-width="1" stroke-dasharray="1.2 2.6">
<ellipse cx="363.7" cy="33" rx="10" ry="7"/>
<ellipse cx="498.5" cy="32.5" rx="8" ry="7"/>
<ellipse cx="569.6" cy="137" rx="7.5" ry="8.5"/>
<ellipse cx="569" cy="204" rx="7" ry="10"/>
<ellipse cx="188.7" cy="221.3" rx="7" ry="10"/>
<ellipse cx="569" cy="288.7" rx="7" ry="10"/>
<ellipse cx="346.5" cy="406.2" rx="9.8" ry="7.3"/>
<ellipse cx="482" cy="406" rx="9.8" ry="6.8"/>
 </g>
 <g fill="none" stroke="#F0F0F0" stroke-width="0.9">
<circle cx="262" cy="44.5" r="1.4"/>
<circle cx="465" cy="43.6" r="1.4"/>
<circle cx="482" cy="43.6" r="1.4"/>
<circle cx="516" cy="43.6" r="1.4"/>
<circle cx="200.1" cy="119" r="1.4"/>
<circle cx="580.4" cy="119.5" r="1.4"/>
<circle cx="580.4" cy="154.5" r="1.4"/>
<circle cx="580.4" cy="169.5" r="1.4"/>
<circle cx="580.4" cy="239" r="1.4"/>
<circle cx="580.4" cy="254.5" r="1.4"/>
<circle cx="580.4" cy="324.5" r="1.4"/>
<circle cx="200.3" cy="323" r="1.4"/>
<circle cx="262" cy="416.5" r="1.4"/>
<circle cx="432" cy="416.5" r="1.4"/>
<circle cx="447.5" cy="416.5" r="1.4"/>
<circle cx="517" cy="416.5" r="1.4"/>
 </g>
 <g stroke="#C8C8C8" stroke-width="1" fill="none">
  <path d="M192.5 398L196.5 403.5L200.5 398M196.5 403.5V410"/>
  <path d="M195.8 419L191.5 430H200L195.8 419ZM195.8 430V448"/>
  <path d="M281.5 439V448"/>
 </g>
</svg>
</body></html>
